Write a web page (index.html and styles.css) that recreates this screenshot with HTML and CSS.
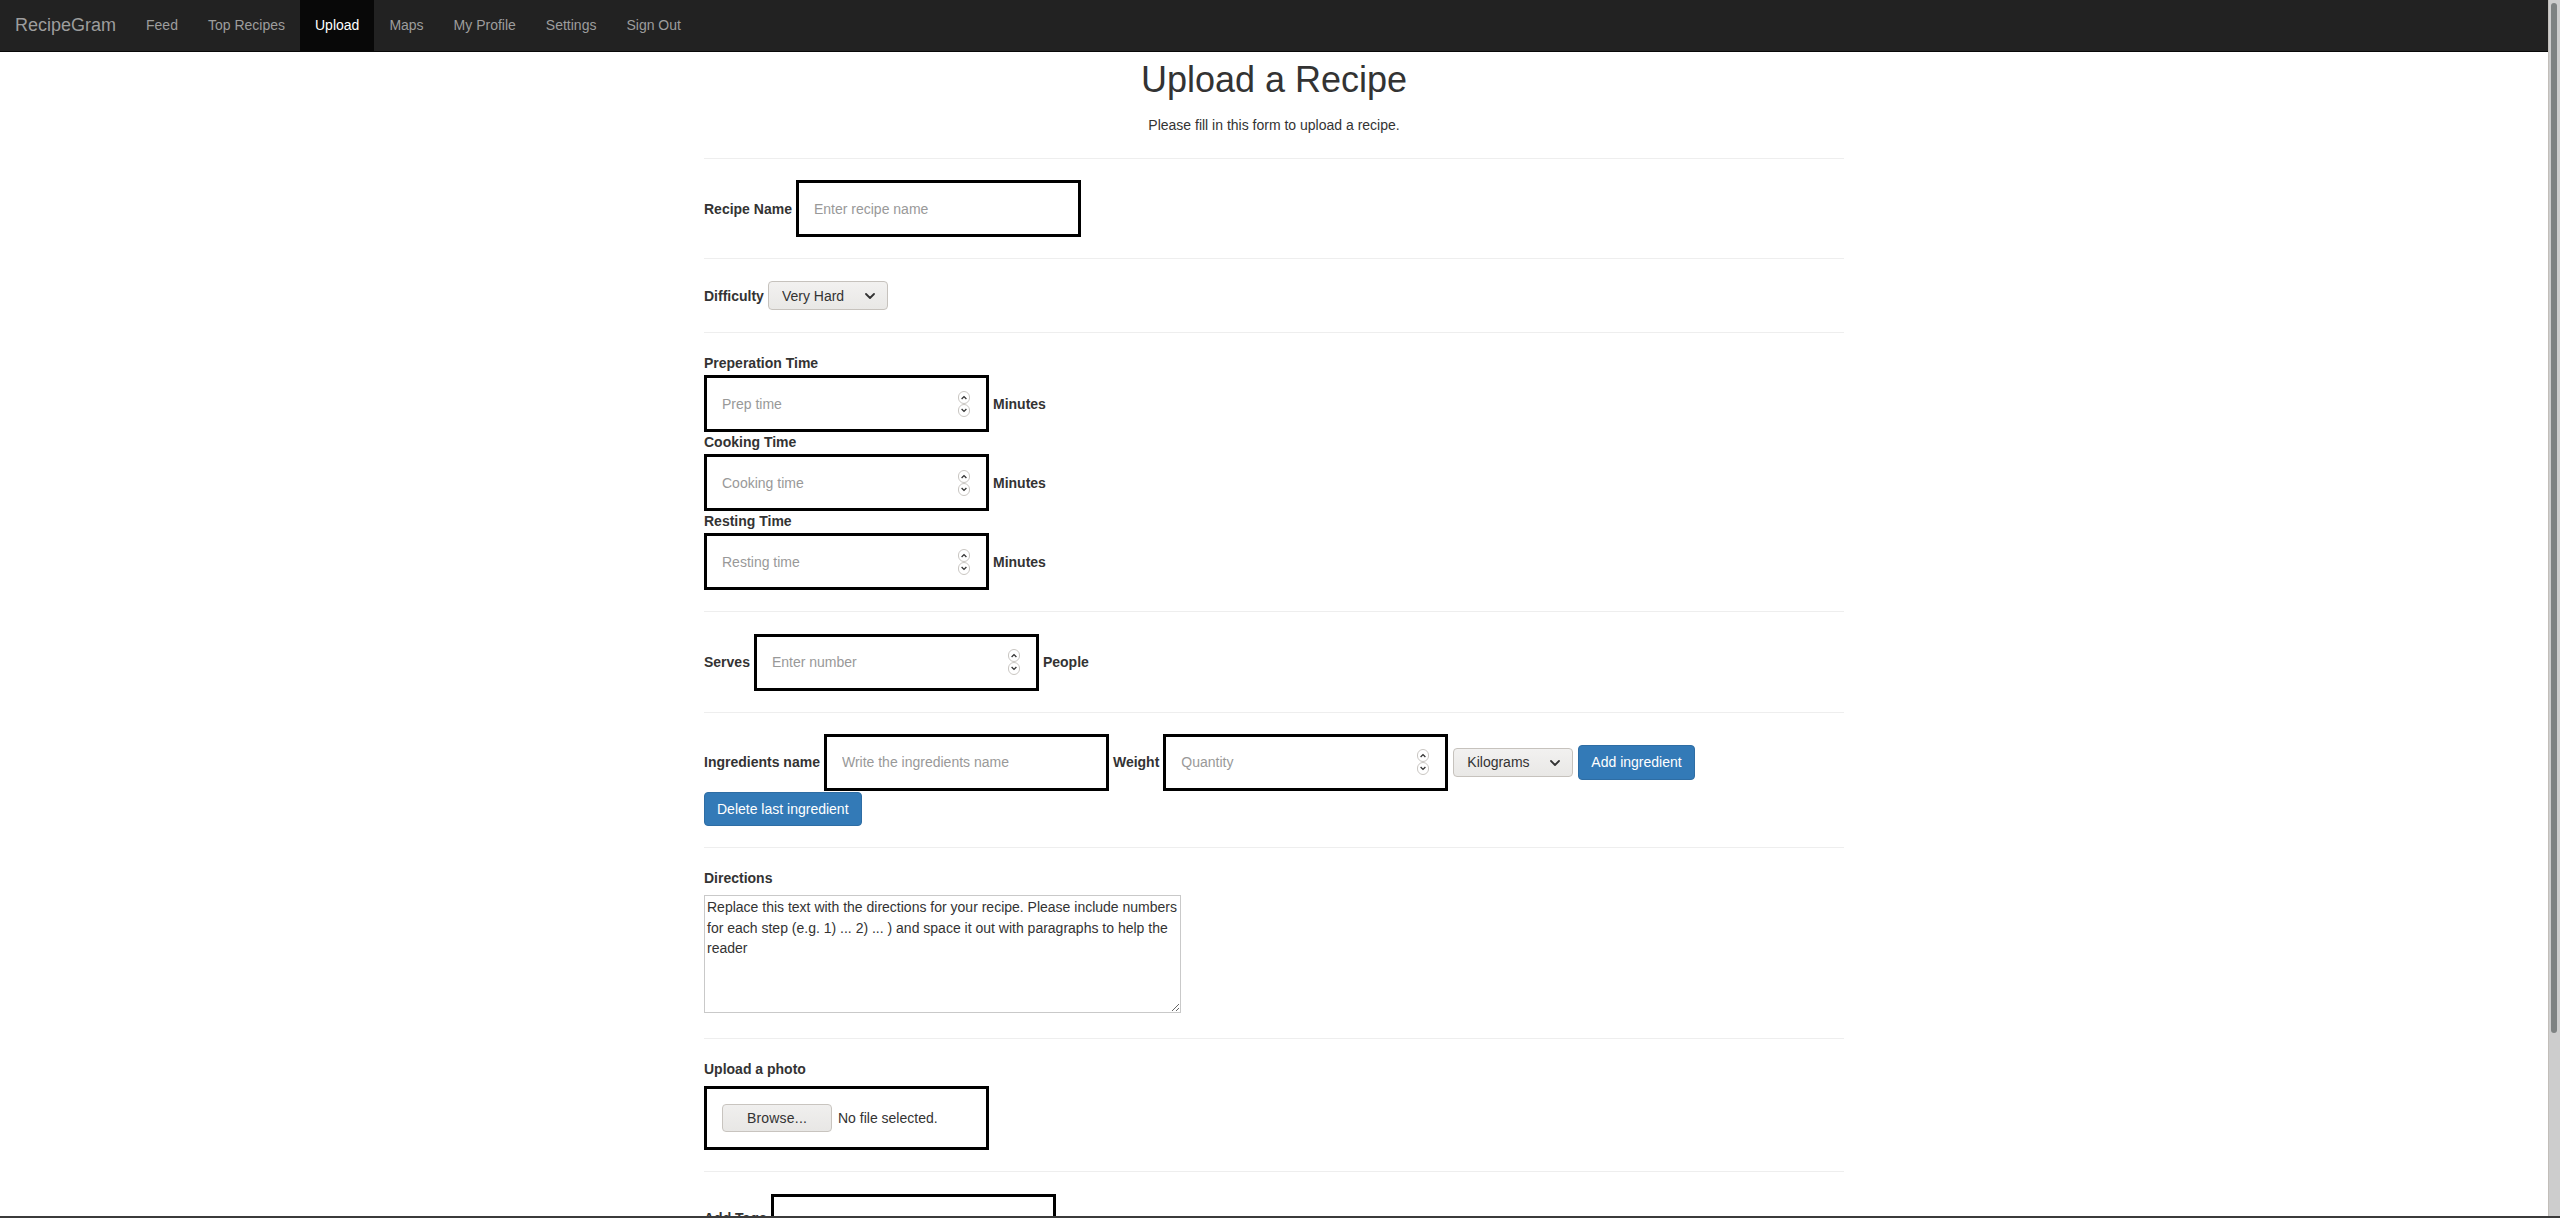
FILE: index.html
```html
<!DOCTYPE html>
<html lang="en">
<head>
<meta charset="utf-8">
<title>RecipeGram - Upload</title>
<link rel="stylesheet" href="styles.css">
</head>
<body>
<nav class="navbar">
  <a class="brand" href="#">RecipeGram</a>
  <ul class="nav">
    <li><a href="#">Feed</a></li>
    <li><a href="#">Top Recipes</a></li>
    <li class="active"><a href="#">Upload</a></li>
    <li><a href="#">Maps</a></li>
    <li><a href="#">My Profile</a></li>
    <li><a href="#">Settings</a></li>
    <li><a href="#">Sign Out</a></li>
  </ul>
</nav>

<main class="container">
  <h1 class="title">Upload a Recipe</h1>
  <p class="subtitle">Please fill in this form to upload a recipe.</p>
  <hr class="sep sep-first">

  <div class="row row-name">
    <label class="lbl">Recipe Name</label>
    <input class="big-input" type="text" placeholder="Enter recipe name">
  </div>
  <hr class="sep">

  <div class="row row-difficulty">
    <label class="lbl">Difficulty</label>
    <span class="select-wrap">
      <select class="select select-diff"><option>Very Hard</option><option>Hard</option><option>Medium</option><option>Easy</option></select>
      <svg class="chev" width="10" height="6" viewBox="0 0 10 6"><path d="M1 1 L5 5 L9 1" fill="none" stroke="#333" stroke-width="1.8" stroke-linecap="round" stroke-linejoin="round"/></svg>
    </span>
  </div>
  <hr class="sep">

  <div class="time-group">
    <label class="block-lbl">Preperation Time</label>
    <div class="field-line">
      <div class="num-box">
        <input class="num-input" type="text" inputmode="numeric" placeholder="Prep time">
        <svg class="spin" width="12" height="26" viewBox="0 0 12 26"><rect x="0.5" y="0.5" width="11" height="12" rx="5.5" fill="#fff" stroke="#c9c6c2"/><rect x="0.5" y="13.5" width="11" height="12" rx="5.5" fill="#fff" stroke="#c9c6c2"/><path d="M3.6 8 L6 5.6 L8.4 8" fill="none" stroke="#333" stroke-width="1.3"/><path d="M3.6 18 L6 20.4 L8.4 18" fill="none" stroke="#333" stroke-width="1.3"/></svg>
      </div>
      <span class="lbl unit">Minutes</span>
    </div>
    <label class="block-lbl">Cooking Time</label>
    <div class="field-line">
      <div class="num-box">
        <input class="num-input" type="text" inputmode="numeric" placeholder="Cooking time">
        <svg class="spin" width="12" height="26" viewBox="0 0 12 26"><rect x="0.5" y="0.5" width="11" height="12" rx="5.5" fill="#fff" stroke="#c9c6c2"/><rect x="0.5" y="13.5" width="11" height="12" rx="5.5" fill="#fff" stroke="#c9c6c2"/><path d="M3.6 8 L6 5.6 L8.4 8" fill="none" stroke="#333" stroke-width="1.3"/><path d="M3.6 18 L6 20.4 L8.4 18" fill="none" stroke="#333" stroke-width="1.3"/></svg>
      </div>
      <span class="lbl unit">Minutes</span>
    </div>
    <label class="block-lbl">Resting Time</label>
    <div class="field-line">
      <div class="num-box">
        <input class="num-input" type="text" inputmode="numeric" placeholder="Resting time">
        <svg class="spin" width="12" height="26" viewBox="0 0 12 26"><rect x="0.5" y="0.5" width="11" height="12" rx="5.5" fill="#fff" stroke="#c9c6c2"/><rect x="0.5" y="13.5" width="11" height="12" rx="5.5" fill="#fff" stroke="#c9c6c2"/><path d="M3.6 8 L6 5.6 L8.4 8" fill="none" stroke="#333" stroke-width="1.3"/><path d="M3.6 18 L6 20.4 L8.4 18" fill="none" stroke="#333" stroke-width="1.3"/></svg>
      </div>
      <span class="lbl unit">Minutes</span>
    </div>
  </div>
  <hr class="sep">

  <div class="row row-serves">
    <label class="lbl">Serves</label>
    <div class="num-box">
      <input class="num-input" type="text" inputmode="numeric" placeholder="Enter number">
      <svg class="spin" width="12" height="26" viewBox="0 0 12 26"><rect x="0.5" y="0.5" width="11" height="12" rx="5.5" fill="#fff" stroke="#c9c6c2"/><rect x="0.5" y="13.5" width="11" height="12" rx="5.5" fill="#fff" stroke="#c9c6c2"/><path d="M3.6 8 L6 5.6 L8.4 8" fill="none" stroke="#333" stroke-width="1.3"/><path d="M3.6 18 L6 20.4 L8.4 18" fill="none" stroke="#333" stroke-width="1.3"/></svg>
    </div>
    <span class="lbl">People</span>
  </div>
  <hr class="sep">

  <div class="ingredients">
    <div class="row ing-line">
      <label class="lbl">Ingredients name</label>
      <input class="big-input" type="text" placeholder="Write the ingredients name">
      <label class="lbl">Weight</label>
      <div class="num-box">
        <input class="num-input" type="text" inputmode="numeric" placeholder="Quantity">
        <svg class="spin" width="12" height="26" viewBox="0 0 12 26"><rect x="0.5" y="0.5" width="11" height="12" rx="5.5" fill="#fff" stroke="#c9c6c2"/><rect x="0.5" y="13.5" width="11" height="12" rx="5.5" fill="#fff" stroke="#c9c6c2"/><path d="M3.6 8 L6 5.6 L8.4 8" fill="none" stroke="#333" stroke-width="1.3"/><path d="M3.6 18 L6 20.4 L8.4 18" fill="none" stroke="#333" stroke-width="1.3"/></svg>
      </div>
      <span class="select-wrap unit-select">
        <select class="select select-unit"><option>Kilograms</option><option>Grams</option><option>Litres</option></select>
        <svg class="chev" width="10" height="6" viewBox="0 0 10 6"><path d="M1 1 L5 5 L9 1" fill="none" stroke="#333" stroke-width="1.8" stroke-linecap="round" stroke-linejoin="round"/></svg>
      </span>
      <button class="btn btn-primary btn-add" type="button">Add ingredient</button>
    </div>
    <button class="btn btn-primary btn-delete" type="button">Delete last ingredient</button>
  </div>
  <hr class="sep">

  <div class="directions">
    <label class="block-lbl dir-lbl">Directions</label>
    <textarea class="dir-text">Replace this text with the directions for your recipe. Please include numbers for each step (e.g. 1) ... 2) ... ) and space it out with paragraphs to help the reader</textarea>
  </div>
  <hr class="sep">

  <div class="photo">
    <label class="block-lbl photo-lbl">Upload a photo</label>
    <div class="file-box">
      <button class="browse" type="button">Browse...</button>
      <span class="file-status">No file selected.</span>
    </div>
  </div>
  <hr class="sep">

  <div class="row row-tags">
    <label class="lbl tags-lbl">Add Tags</label>
    <input class="big-input" type="text" placeholder="Write tags separated by commas">
  </div>
  <hr class="sep">

  <div class="submit-row">
    <button class="btn btn-primary" type="button">Upload Recipe</button>
  </div>
</main>
<div class="scrollbar"><div class="scroll-thumb"></div></div>
<div class="window-edge"></div>
</body>
</html>
```

FILE: styles.css
```css
* {
  box-sizing: border-box;
}
body {
  margin: 0;
  padding-right: 12px;
  background: #fff;
  color: #333;
  font-family: "Liberation Sans", Arial, Helvetica, sans-serif;
  font-size: 14px;
  line-height: 20px;
}

/* simulated window scrollbar */
.scrollbar {
  position: fixed;
  top: 0;
  right: 0;
  bottom: 0;
  width: 12px;
  background: #cdcdcd;
  border-left: 1px solid #c2beb9;
  z-index: 5;
}
.scroll-thumb {
  margin: 3px 0 0 2px;
  width: 6px;
  height: 1030px;
  border-radius: 3px;
  background: #7e8282;
}

/* navbar */
.navbar {
  height: 52px;
  background: #222;
  border-bottom: 1px solid #080808;
  display: flex;
  align-items: stretch;
}
.brand {
  padding: 15px;
  font-size: 18px;
  line-height: 20px;
  color: #9d9d9d;
  text-decoration: none;
}
.nav {
  display: flex;
  list-style: none;
  margin: 0;
  padding: 0;
}
.nav li a {
  display: block;
  padding: 15px;
  line-height: 20px;
  color: #9d9d9d;
  text-decoration: none;
  height: 51px;
}
.nav li.active a {
  background: #080808;
  color: #fff;
}

/* container */
.container {
  width: 1140px;
  margin: 0 auto;
  padding-bottom: 107px;
}
.title {
  margin: 8px 0 15px;
  font-size: 36px;
  line-height: 40px;
  font-weight: 500;
  text-align: center;
  color: #333;
}
.subtitle {
  margin: 0;
  text-align: center;
}
.sep {
  margin: 20px 0;
  border: 0;
  border-top: 1px solid #eee;
  height: 0;
}
.sep-first {
  margin-top: 23px;
}

.lbl, .block-lbl {
  font-weight: bold;
  color: #333;
}
.block-lbl {
  display: block;
  height: 20px;
}

.row {
  display: flex;
  align-items: center;
  gap: 4px;
}
.row-name {
  height: 59px;
}
.row-difficulty {
  height: 33px;
}
.row-serves,
.row-tags {
  height: 60px;
}
.tags-lbl {
  margin-bottom: 8px;
}

.big-input {
  width: 285px;
  height: 57px;
  border: 3px solid #000;
  padding: 0 15px;
  font: inherit;
  color: #333;
  background: #fff;
  outline: none;
}
.big-input::placeholder,
.num-input::placeholder {
  color: #999;
  opacity: 1;
}

.num-box {
  width: 285px;
  height: 57px;
  border: 3px solid #000;
  padding: 0 15px;
  display: flex;
  align-items: center;
  background: #fff;
  flex: none;
}
.num-input {
  flex: 1;
  min-width: 0;
  border: 0;
  padding: 0;
  font: inherit;
  color: #333;
  outline: none;
  background: transparent;
}
.spin {
  flex: none;
  display: block;
  margin-right: 1px;
}

/* selects */
.select-wrap {
  position: relative;
  display: inline-block;
  flex: none;
}
.select {
  appearance: none;
  -webkit-appearance: none;
  width: 120px;
  height: 29px;
  padding: 0 28px 0 13px;
  font: inherit;
  color: #333;
  border: 1px solid #c6c2bd;
  border-radius: 4px;
  background: linear-gradient(#f2f1f0, #e9e8e6);
  outline: none;
}
.chev {
  position: absolute;
  right: 13px;
  top: 12px;
  pointer-events: none;
}

.time-group {
  padding-bottom: 1px;
}
.field-line {
  display: flex;
  align-items: center;
  gap: 4px;
  margin-top: 2px;
}

/* ingredients */
.ingredients {
  padding-bottom: 1px;
}
.ing-line {
  height: 58px;
}
.unit-select {
  margin-left: 1px;
}
.btn {
  display: inline-block;
  padding: 6px 12px;
  font: inherit;
  line-height: 20px;
  border: 1px solid transparent;
  border-radius: 4px;
  cursor: pointer;
}
.btn-primary {
  color: #fff;
  background: #337ab7;
  border-color: #2e6da4;
}
.btn-add {
  margin-left: 1px;
  height: 35px;
}
.btn-delete {
  display: block;
  margin-top: 1px;
  height: 34px;
}

/* directions */
.directions {
  padding-bottom: 5px;
}
.dir-lbl {
  margin-bottom: 7px;
}
.dir-text {
  display: block;
  width: 477px;
  height: 118px;
  border: 1px solid #c9c9c9;
  padding: 1px 2px;
  font: inherit;
  line-height: 20.5px;
  color: #333;
  resize: both;
  outline: none;
}

/* photo */
.photo {
  padding-bottom: 1px;
}
.photo-lbl {
  margin-bottom: 7px;
}
.file-box {
  width: 285px;
  height: 64px;
  border: 3px solid #000;
  padding: 15px;
  display: flex;
  align-items: center;
  gap: 6px;
}
.browse {
  width: 110px;
  height: 28px;
  font: inherit;
  color: #333;
  background: linear-gradient(#f0efee, #e8e7e5);
  border: 1px solid #c8c4bf;
  border-radius: 4px;
  letter-spacing: 0.2px;
}
.file-status {
  color: #333;
}

.submit-row {
  height: 34px;
}

.window-edge {
  position: fixed;
  left: 0;
  right: 0;
  bottom: 0;
  height: 2px;
  background: #3b3b3b;
  z-index: 6;
}
```
